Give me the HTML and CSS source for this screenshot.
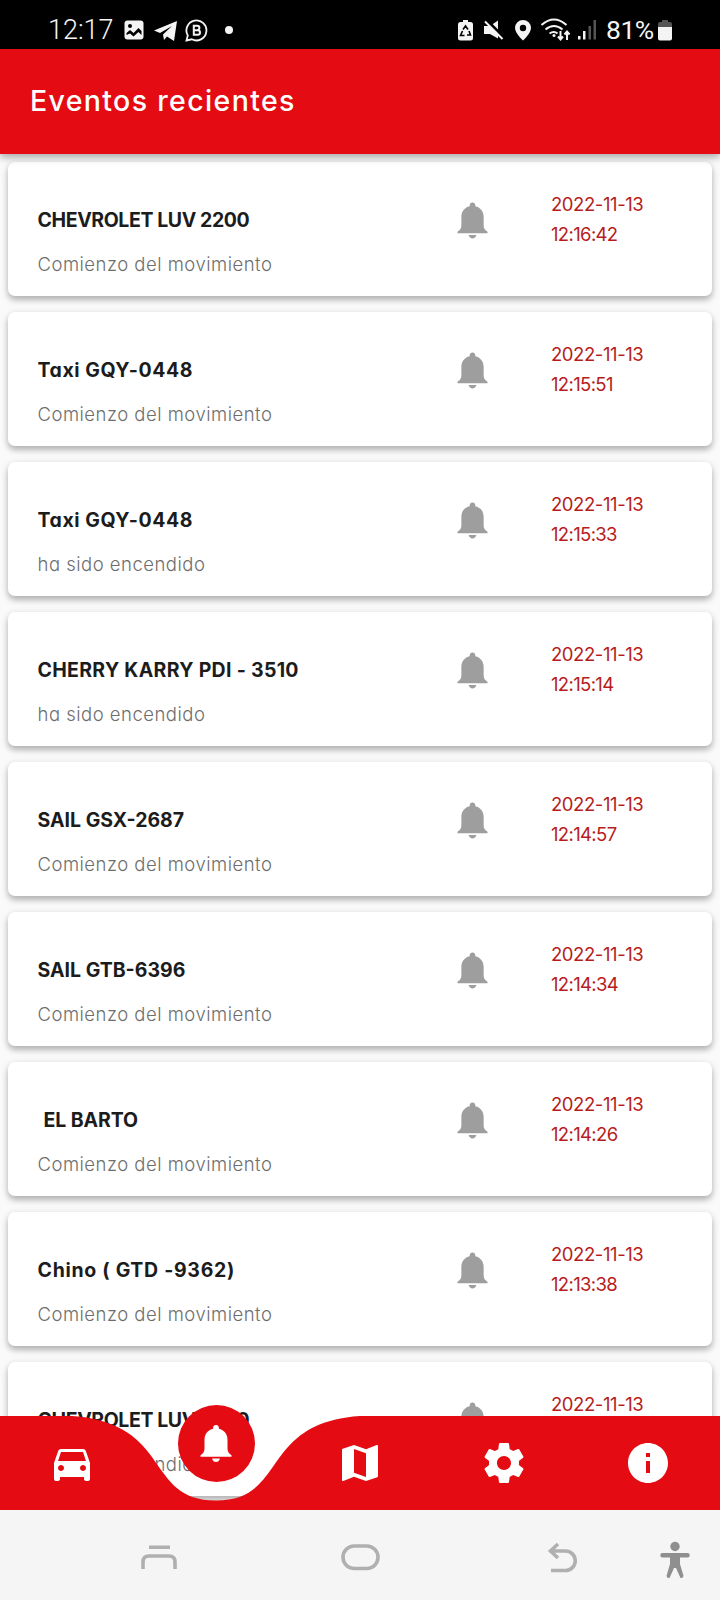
FILE: index.html
```html
<!DOCTYPE html>
<html lang="es">
<head>
<meta charset="utf-8">
<title>Eventos recientes</title>
<link rel="stylesheet" href="styles.css">
</head>
<body>
<svg width="0" height="0" class="defs"><defs>
<symbol id="bell" viewBox="0 0 32 38"><path d="M16 0.500c-1.700 0-2.900 1.200-2.900 2.900v.8C8 5.400 4.500 9.400 4.500 15v9c0 3.500-1.500 5.200-4 6.700v1.500h31v-1.500c-2.500-1.500-4-3.200-4-6.700V15c0-5.600-3.500-9.600-8.600-10.800v-.8C18.900 1.700 17.700.5 16 .5zM12 33.900c.6 2.200 2.200 3.600 4 3.600s3.400-1.400 4-3.600z"/></symbol>
</defs></svg>
<div class="screen">
  <div class="status">
    <div class="status-left">
      <span class="clock">12:17</span>
      <svg class="s-image" width="20" height="20" viewBox="0 0 20 20"><rect x=".5" y=".5" width="19" height="19" rx="3" fill="#f4f4f4"/><circle cx="6" cy="6" r="2" fill="#000"/><path d="M2.500 15V13l3.500-3 3.500 3 5-5L17.500 11v4l-3-3L9.500 16.500 6 13.500z" fill="#000"/></svg>
      <svg class="s-plane" width="23" height="20" viewBox="0 0 23 20"><path d="M0 9.500L23 0 20 20l-7-4.500-3 3.500-1-5.500L18 5 6 12z" fill="#f4f4f4"/></svg>
      <svg class="s-chat" width="23" height="23" viewBox="0 0 23 23"><path d="M1.500 21.500l1.300-5A10 10 0 1 1 6.800 20.300z" fill="none" stroke="#f4f4f4" stroke-width="1.800"/><path d="M8.800 6.800h3.400a2.200 2.200 0 0 1 0 4.400H8.800zM8.800 11.200h3.900a2.300 2.300 0 0 1 0 4.600H8.800z" fill="none" stroke="#f4f4f4" stroke-width="2"/></svg>
      <i class="s-dot"></i>
    </div>
    <div class="status-right">
      <svg width="258" height="30" viewBox="448 15 258 30" class="s-icons">
        <path d="M463 20h5v2h2.500a2.500 2.500 0 0 1 2.500 2.500V38a2.500 2.500 0 0 1-2.500 2.500h-10A2.500 2.500 0 0 1 458 38V24.500a2.500 2.500 0 0 1 2.500-2.500h2.500z" fill="#f4f4f4"/>
        <path d="M463 29.500l2.500-3.500 2.500 3.500M469 31l1.500 4H467M464.500 35.500h-4l2-4.500" fill="none" stroke="#000" stroke-width="1.600"/>
        <path d="M484 26h6l8-5.500v18L490 34h-6z" fill="#f4f4f4"/><path d="M486 19.500l18 18" stroke="#000" stroke-width="3"/><path d="M485 21.500l17.500 17.500" stroke="#f4f4f4" stroke-width="2"/>
        <path fill-rule="evenodd" d="M523 20a8 8 0 0 0-8 8c0 5.500 8 12.500 8 12.500s8-7 8-12.500a8 8 0 0 0-8-8zm0 4.800a3.200 3.200 0 1 1 0 6.400 3.200 3.200 0 0 1 0-6.400z" fill="#f4f4f4"/>
        <g fill="none" stroke="#f4f4f4" stroke-width="2"><path d="M541.500 25q12.500-11 25 0M545.500 29.500q8.500-7 17 0M549.500 33.500q4.500-3 8 0M560.500 31v8M558 36.500l2.500 3 2.500-3M567 40v-8M564.500 34.500l2.500-3 2.500 3"/></g><circle cx="554" cy="35.500" r="1.500" fill="#f4f4f4"/>
        <path d="M578 36h2.500v3.500H578zM583 31h2.500v8.500H583z" fill="#f4f4f4"/><path d="M588.500 26h2.500v13.500h-2.500zM593.500 20h2.500v19.500h-2.500z" fill="#555"/>
      </svg>
      <span class="percent">81%</span>
      <svg class="s-batt" width="14" height="21" viewBox="0 0 14 21"><path d="M4 0h6v2h2a2 2 0 0 1 2 2v4H0V4a2 2 0 0 1 2-2h2z" fill="#555"/><path d="M0 7h14v11.500a2 2 0 0 1-2 2H2a2 2 0 0 1-2-2z" fill="#f4f4f4"/></svg>
    </div>
  </div>
  <header class="appbar"><h1>Eventos recientes</h1></header>
  <main class="list">
    <article class="card"><div class="info"><h2 class="tight">CHEVROLET LUV 2200</h2><p>Comienzo del movimiento</p></div><svg class="bell"><use href="#bell"/></svg><time><span>2022-11-13</span><span class="hour">12:16:42</span></time></article>
    <article class="card"><div class="info"><h2 class="wide">Taxi GQY-0448</h2><p>Comienzo del movimiento</p></div><svg class="bell"><use href="#bell"/></svg><time><span>2022-11-13</span><span class="hour">12:15:51</span></time></article>
    <article class="card"><div class="info"><h2 class="wide">Taxi GQY-0448</h2><p>ha sido encendido</p></div><svg class="bell"><use href="#bell"/></svg><time><span>2022-11-13</span><span class="hour">12:15:33</span></time></article>
    <article class="card"><div class="info"><h2 class="loose">CHERRY KARRY PDI - 3510</h2><p>ha sido encendido</p></div><svg class="bell"><use href="#bell"/></svg><time><span>2022-11-13</span><span class="hour">12:15:14</span></time></article>
    <article class="card"><div class="info"><h2>SAIL GSX-2687</h2><p>Comienzo del movimiento</p></div><svg class="bell"><use href="#bell"/></svg><time><span>2022-11-13</span><span class="hour">12:14:57</span></time></article>
    <article class="card"><div class="info"><h2>SAIL GTB-6396</h2><p>Comienzo del movimiento</p></div><svg class="bell"><use href="#bell"/></svg><time><span>2022-11-13</span><span class="hour">12:14:34</span></time></article>
    <article class="card"><div class="info"><h2 class="indent">EL BARTO</h2><p>Comienzo del movimiento</p></div><svg class="bell"><use href="#bell"/></svg><time><span>2022-11-13</span><span class="hour">12:14:26</span></time></article>
    <article class="card"><div class="info"><h2 class="wider">Chino ( GTD -9362)</h2><p>Comienzo del movimiento</p></div><svg class="bell"><use href="#bell"/></svg><time><span>2022-11-13</span><span class="hour">12:13:38</span></time></article>
    <article class="card"><div class="info"><h2 class="tight">CHEVROLET LUV 2200</h2><p>ha sido encendido</p></div><svg class="bell"><use href="#bell"/></svg><time><span>2022-11-13</span></time></article>
  </main>
  <nav class="tabs">
    <svg class="tabs-shape" width="720" height="94" viewBox="0 0 720 94"><path d="M0 0H72C172.800 7 144 84.500 216 84.500S259.200 7 360 0H720V94H0z" fill="#e40c12"/></svg>
    <a class="tab"><svg width="48" height="48" viewBox="0 0 24 24"><path d="M18.920 6.010C18.720 5.420 18.160 5 17.500 5h-11c-.66 0-1.210.42-1.420 1.010L3 12v8c0 .55.45 1 1 1h1c.55 0 1-.45 1-1v-1h12v1c0 .55.450 1 1 1h1c.550 0 1-.450 1-1v-8l-2.080-5.990zM6.500 16c-.83 0-1.500-.67-1.500-1.500S5.670 13 6.500 13s1.500.67 1.500 1.500S7.330 16 6.500 16zm11 0c-.83 0-1.500-.67-1.500-1.500s.67-1.500 1.500-1.500 1.500.67 1.500 1.500-.67 1.500-1.500 1.500zM5 11l1.500-4.500h11L19 11H5z"/></svg></a>
    <a class="tab active"><span class="bubble"><svg width="32" height="39"><use href="#bell"/></svg></span></a>
    <a class="tab"><svg width="48" height="48" viewBox="0 0 24 24"><path d="M20.500 3l-.16.030L15 5.100 9 3 3.360 4.900c-.21.07-.36.25-.36.480V20.500c0 .28.220.5.500.5l.16-.03L9 18.900l6 2.100 5.640-1.900c.21-.07.36-.25.36-.480V3.500c0-.28-.22-.5-.5-.5zM15 19l-6-2.110V5l6 2.110V19z"/></svg></a>
    <a class="tab"><svg width="48" height="48" viewBox="0 0 24 24"><path d="M19.430 12.980c.04-.32.07-.64.07-.98s-.03-.66-.07-.98l2.110-1.650c.19-.15.24-.42.12-.64l-2-3.460c-.12-.22-.39-.3-.61-.22l-2.490 1c-.52-.4-1.080-.73-1.690-.98l-.38-2.650C14.460 2.180 14.250 2 14 2h-4c-.25 0-.46.18-.49.42l-.38 2.650c-.61.25-1.170.59-1.690.98l-2.490-1c-.23-.09-.49 0-.61.22l-2 3.460c-.13.22-.07.49.12.640l2.110 1.650c-.04.32-.07.650-.07.980s.03.660.07.980l-2.110 1.650c-.19.150-.24.420-.12.640l2 3.460c.12.220.39.300.61.220l2.490-1c.52.400 1.080.730 1.690.980l.38 2.650c.03.240.24.420.49.420h4c.25 0 .46-.18.490-.42l.38-2.650c.61-.25 1.170-.59 1.690-.98l2.490 1c.23.090.49 0 .61-.22l2-3.460c.12-.22.07-.49-.12-.64l-2.110-1.650zM12 15.500c-1.930 0-3.500-1.570-3.500-3.500s1.570-3.500 3.500-3.500 3.500 1.570 3.500 3.500-1.570 3.500-3.500 3.500z"/></svg></a>
    <a class="tab"><svg width="48" height="48" viewBox="0 0 24 24"><path d="M12 2C6.480 2 2 6.480 2 12s4.480 10 10 10 10-4.480 10-10S17.520 2 12 2zm1 15h-2v-6h2v6zm0-8h-2V7h2v2z"/></svg></a>
  </nav>
  <footer class="sysnav">
    <svg width="720" height="90" viewBox="0 0 720 90" fill="none" stroke="#b0b0b0" stroke-width="3.600">
      <path d="M149 37.300h21M143 59v-7q0-6 6-6h20q6 0 6 6v7"/>
      <rect x="343" y="36" width="35" height="22.500" rx="11.200"/>
      <path d="M558 34l-7.500 7 7.500 7M551.500 41h14a9.500 9.500 0 0 1 0 19.500H551"/>
      <g fill="#8f8f8f" stroke="none"><circle cx="675" cy="36.500" r="4.700"/><path d="M662.500 43h25a1.800 1.800 0 0 1 0 4.500H680V54l3.500 12q-.5 2.500-3 2L676 58h-2l-4.500 10q-2.500.5-3-2L670 54v-6.500h-7.500a1.800 1.800 0 0 1 0-4.500z"/></g>
    </svg>
  </footer>
</div>
</body>
</html>
```
FILE: styles.css
```css
* { box-sizing: border-box; margin: 0; padding: 0; }
body { background: #fafafa; font-family: Inter, "Open Sans", sans-serif; font-feature-settings: "cv11"; }
svg { display: block; }
.defs { position: absolute; }
.screen { position: relative; width: 720px; height: 1600px; display: flex; flex-direction: column; overflow: hidden; }
.status { height: 48.500px; flex: none; background: #000; color: #f4f4f4; display: flex; justify-content: space-between; font-family: Roboto, sans-serif; font-size: 27px; }
.status-left, .status-right { display: flex; align-items: flex-start; }
.status-left { padding-left: 48px; }
.status-right { padding-right: 48px; }
.clock, .percent { line-height: 30px; padding-top: 15px; }
.clock { width: 76px; font-weight: 300; }
.s-image { margin-top: 20px; margin-right: 10px; }
.s-plane { margin-top: 21px; margin-right: 8px; }
.s-chat { margin-top: 19px; margin-right: 17px; }
.s-dot { width: 8px; height: 8px; border-radius: 50%; background: #f4f4f4; margin-top: 26px; }
.s-icons { margin-top: 15px; margin-right: -100px; }
.percent { width: 52px; font-size: 26.500px; letter-spacing: -.5px; }
.s-batt { margin-top: 20px; }
.appbar { height: 105px; flex: none; background: #e40c12; padding-left: 30px; position: relative; z-index: 1; box-shadow: 0 3px 8px rgba(0,0,0,.35); }
.appbar h1 { color: #fff; font-size: 28.500px; font-weight: 500; line-height: 103px; letter-spacing: 1.350px; }
.list { flex: 1; min-height: 0; overflow: hidden; padding: 8px; display: flex; flex-direction: column; gap: 16px; }
.card { height: 134.500px; margin-bottom: -.5px; flex: none; background: #fff; border-radius: 7px; box-shadow: 0 4px 6px rgba(0,0,0,.26), 0 1px 8px rgba(0,0,0,.08); display: flex; }
.info { width: 449px; padding: 43px 0 0 29.500px; }
.info h2 { font-size: 19.500px; font-weight: 700; line-height: 30px; color: #1c1c1c; white-space: nowrap; }
.info .tight { letter-spacing: -.4px; }
.info .loose { letter-spacing: .3px; }
.info .wide { letter-spacing: .55px; }
.info .wider { letter-spacing: .7px; }
.info .indent { padding-left: 6px; letter-spacing: -.1px; }
.info p { font-size: 18.500px; font-weight: 300; line-height: 30px; margin-top: 14px; color: #6e6e6e; letter-spacing: .49px; white-space: nowrap; }
.bell { width: 31px; height: 37px; margin-top: 40px; fill: #9e9e9e; }
time { padding: 27px 0 0 63px; display: flex; flex-direction: column; font-size: 18.500px; line-height: 30px; color: #b71c1c; letter-spacing: -.42px; }
.hour { letter-spacing: -.65px; }
.tabs { position: absolute; left: 0; top: 1416px; width: 720px; height: 94px; display: flex; z-index: 2; }
.tabs-shape { position: absolute; left: 0; top: 0; }
.tab { position: relative; flex: 1; display: flex; justify-content: center; padding-top: 23px; fill: #fff; }
.tab.active { padding-top: 0; }
.bubble { width: 77px; height: 77px; margin-top: -11px; border-radius: 50%; background: #e40c12; display: flex; align-items: center; justify-content: center; }
.sysnav { height: 90px; flex: none; background: #f5f5f5; }
```
